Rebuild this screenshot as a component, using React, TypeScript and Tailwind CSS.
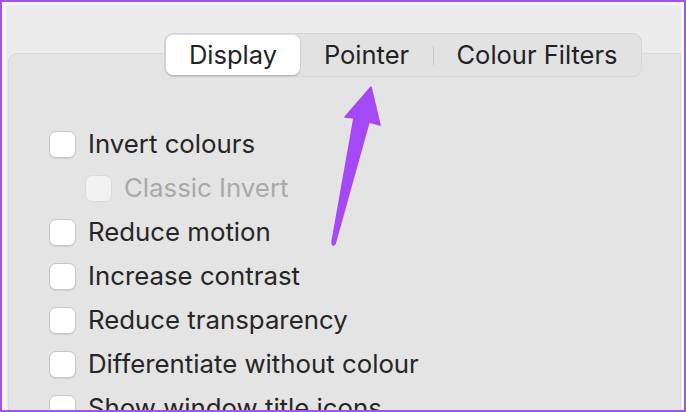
import React from "react";

const rows: { label: string; indent?: boolean; disabled?: boolean }[] = [
  { label: "Invert colours" },
  { label: "Classic Invert", indent: true, disabled: true },
  { label: "Reduce motion" },
  { label: "Increase contrast" },
  { label: "Reduce transparency" },
  { label: "Differentiate without colour" },
  { label: "Show window title icons" },
];

export default function App() {
  return (
    <div
      className="relative w-[686px] h-[412px] overflow-hidden border-2 border-[#a552ec] bg-[#ececec]"
      style={{ fontFamily: "Inter, 'Noto Sans', sans-serif" }}
    >
      <div className="h-full border-t-[3px] border-l-[4px] border-r-[3px] border-[#f6f6f6]">
        <div className="ml-[2px] mt-[48px] h-[400px] rounded-tl-[9px] border border-[#d9d9d9] bg-[#e4e4e4]">
          <div className="-mt-[21px] ml-[155px] flex h-[44px] w-[478px] items-center rounded-[9px] border border-[#d6d6d6] bg-[#e2e2e2] px-[1px] text-[25.5px] text-[#232323]">
            <div className="flex h-[40px] w-[134px] items-center justify-center rounded-[7px] bg-white shadow-[0_1px_2px_rgba(0,0,0,0.25)]">
              Display
            </div>
            <div className="flex h-[40px] w-[133px] items-center justify-center">Pointer</div>
            <div className="h-[19px] w-px bg-[#c8c8c8]" />
            <div className="flex h-[40px] flex-1 items-center justify-center">Colour Filters</div>
          </div>
          <div className="mt-[45px] flex flex-col pl-[40px]">
            {rows.map((r) => (
              <div
                key={r.label}
                className={`flex h-[44px] items-center gap-[12px] ${r.indent ? "pl-[36px]" : ""}`}
              >
                <div
                  className={`h-[27px] w-[27px] shrink-0 rounded-[7px] border ${
                    r.disabled
                      ? "border-[#dadada] bg-[#f1f1f1]"
                      : "border-[#c6c6c6] bg-white shadow-[0_1px_1px_rgba(0,0,0,0.08)]"
                  }`}
                />
                <span
                  className={`text-[25.8px] leading-none ${
                    r.disabled ? "text-[#a9a9a9]" : "text-[#262626]"
                  }`}
                >
                  {r.label}
                </span>
              </div>
            ))}
          </div>
        </div>
      </div>
      <svg
        className="absolute left-0 top-0"
        width="686"
        height="412"
        viewBox="0 0 686 412"
      >
        <path
          d="M369 85 L378 123 L367 120 L333 242 Q330 245 330 240 L352 116 L343 115 Z"
          fill="#a548f5"
          stroke="#a548f5"
          strokeWidth="1.5"
          strokeLinejoin="round"
        />
      </svg>
    </div>
  );
}
